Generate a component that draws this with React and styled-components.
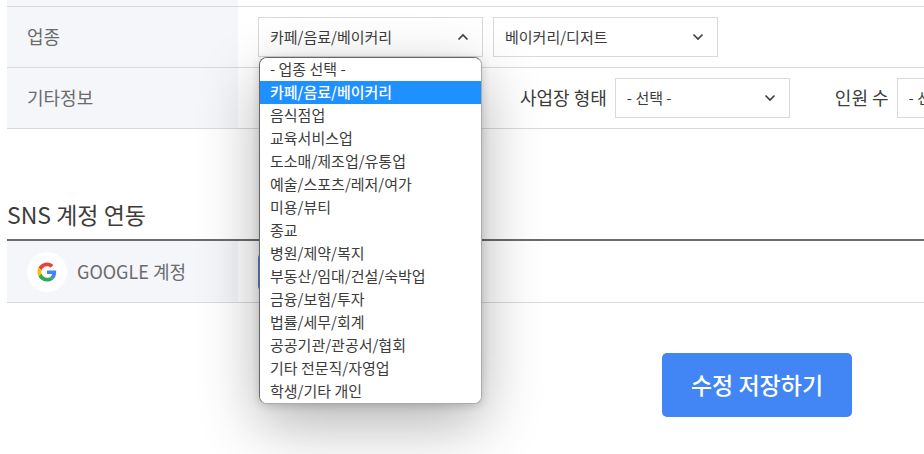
import { useState } from 'react';
import styled, { createGlobalStyle } from 'styled-components';

const GlobalStyle = createGlobalStyle`
  * {
    box-sizing: border-box;
  }

  body {
    margin: 0;
    background: #fff;
    color: #3c3c3c;
    font-family: 'Noto Sans CJK KR', 'Noto Sans', sans-serif;
  }

  button,
  select {
    font-family: inherit;
    color: inherit;
  }
`;

const BUSINESS_TYPES = [
  '- 업종 선택 -',
  '카페/음료/베이커리',
  '음식점업',
  '교육서비스업',
  '도소매/제조업/유통업',
  '예술/스포츠/레저/여가',
  '미용/뷰티',
  '종교',
  '병원/제약/복지',
  '부동산/임대/건설/숙박업',
  '금융/보험/투자',
  '법률/세무/회계',
  '공공기관/관공서/협회',
  '기타 전문직/자영업',
  '학생/기타 개인',
];

const Page = styled.main`
  padding-left: 7px;
  overflow: hidden;
`;

const Table = styled.table`
  width: 100%;
  table-layout: fixed;
  border-collapse: separate;
  border-spacing: 0;
  border-top: ${(p) => (p.$section ? '2px solid #6b6b6e' : 'none')};
`;

const HeadCell = styled.th`
  width: 231px;
  padding: 0 20px 2px;
  border-bottom: 1px solid #d9d9d9;
  background: #f5f6fa;
  color: #6b6b6b;
  font-size: 18px;
  font-weight: 400;
  line-height: 26px;
  text-align: left;
`;

const Cell = styled.td`
  padding: 10px 0 10px 20px;
  border-bottom: 1px solid #d9d9d9;
`;

const SpacerRow = styled.tr`
  > th,
  > td {
    padding: 3px 20px;
  }
`;

const AccountRow = styled.tr`
  > th {
    padding: 11px 20px 10px;
  }
`;

const Fields = styled.div`
  display: flex;
  gap: ${(p) => (p.$wide ? 45 : 10)}px;
`;

const Field = styled.div`
  display: flex;
  flex: none;
  align-items: center;
  justify-content: flex-end;
  gap: 8px;
  min-width: ${(p) => (p.$indented ? '217px' : 'auto')};
`;

const FieldLabel = styled.label`
  padding-bottom: 2px;
  font-size: 18px;
  line-height: 26px;
  white-space: nowrap;
`;

const SelectBox = styled.div`
  position: relative;
  display: grid;
  flex: none;
  width: ${(p) => (p.$small ? 175 : 225)}px;
  align-items: center;

  > select,
  > svg {
    grid-area: 1 / 1;
  }

  > svg {
    justify-self: end;
    margin-right: 14px;
    pointer-events: none;
  }
`;

const NativeSelect = styled.select`
  width: 100%;
  height: 40px;
  padding: 0 30px 2px 11px;
  border: 1px solid #d9d9d9;
  border-radius: 0;
  background: #fff;
  appearance: none;
  font-size: 15px;
  outline: none;
`;

const Menu = styled.ul`
  position: absolute;
  z-index: 1;
  top: 100%;
  left: 1px;
  right: 1px;
  margin: 0;
  padding: 0;
  overflow: hidden;
  border: 1px solid #aaa;
  border-top-color: #666;
  border-left-color: #666;
  border-radius: 8px;
  background: #fff;
  box-shadow: 0 20px 60px rgba(0, 0, 0, 0.3), 0 2px 8px rgba(0, 0, 0, 0.16);
  list-style: none;
`;

const Option = styled.li`
  padding: 0 10px 2px;
  background: ${(p) => (p.$selected ? '#1e90ff' : '#fff')};
  color: ${(p) => (p.$selected ? '#fff' : '#3c3c3c')};
  font-size: 15px;
  font-weight: ${(p) => (p.$selected ? 500 : 400)};
  line-height: 21px;
  white-space: nowrap;
  cursor: default;
`;

const Title = styled.h2`
  margin: 67px 0 7px;
  font-size: 23px;
  font-weight: 400;
  line-height: 36px;
`;

const Account = styled.div`
  display: flex;
  align-items: center;
  gap: 10px;
`;

const AccountIcon = styled.span`
  display: flex;
  width: 40px;
  height: 40px;
  align-items: center;
  justify-content: center;
  border-radius: 50%;
  background: #fff;
`;

const AccountName = styled.span`
  padding-bottom: 2px;
`;

const ConnectButton = styled.button`
  display: block;
  width: 120px;
  height: 36px;
  border: none;
  border-radius: 4px;
  background: #4285f4;
`;

const Actions = styled.div`
  display: flex;
  justify-content: flex-end;
  padding: 50px 72px 37px 0;
`;

const SaveButton = styled.button`
  width: 190px;
  height: 64px;
  padding: 0 0 2px;
  border: none;
  border-radius: 5px;
  background: #4285f4;
  color: #fff;
  font-size: 23px;
  font-weight: 500;
`;

const Chevron = ({ up }) => (
  <svg width="12" height="8" viewBox="0 0 12 8" fill="none" aria-hidden="true">
    <path
      d={up ? 'M1.5 6.5 6 2l4.5 4.5' : 'M1.5 1.5 6 6l4.5-4.5'}
      stroke="#3c3c3c"
      strokeWidth="1.6"
    />
  </svg>
);

const GoogleLogo = () => (
  <svg width="20" height="20" viewBox="-1 -1 50 50" aria-hidden="true">
    <path
      fill="#EA4335"
      d="M24 9.5c3.54 0 6.71 1.22 9.21 3.6l6.85-6.85C35.9 2.38 30.47 0 24 0 14.62 0 6.51 5.38 2.56 13.22l7.98 6.19C12.43 13.72 17.74 9.5 24 9.5z"
    />
    <path
      fill="#4285F4"
      d="M46.98 24.55c0-1.57-.15-3.09-.38-4.55H24v9.02h12.94c-.58 2.96-2.26 5.48-4.78 7.18l7.73 6c4.51-4.18 7.09-10.36 7.09-17.65z"
    />
    <path
      fill="#FBBC05"
      d="M10.53 28.59A14.5 14.5 0 0 1 9.77 24c0-1.6.27-3.14.76-4.59l-7.98-6.19A23.9 23.9 0 0 0 0 24c0 3.88.92 7.54 2.56 10.78l7.97-6.19z"
    />
    <path
      fill="#34A853"
      d="M24 48c6.48 0 11.93-2.13 15.89-5.81l-7.73-6c-2.15 1.45-4.92 2.3-8.16 2.3-6.26 0-11.57-4.22-13.47-9.91l-7.98 6.19C6.51 42.62 14.62 48 24 48z"
    />
  </svg>
);

const Select = ({ options, small, ...props }) => (
  <SelectBox $small={small}>
    <NativeSelect {...props}>
      {options.map((option) => (
        <option key={option}>{option}</option>
      ))}
    </NativeSelect>
    <Chevron />
  </SelectBox>
);

const BusinessTypeSelect = () => {
  const [value, setValue] = useState(BUSINESS_TYPES[1]);
  const [isOpen, setIsOpen] = useState(true);

  return (
    <SelectBox>
      <NativeSelect
        id="business-type"
        value={value}
        onChange={(e) => setValue(e.target.value)}
        onMouseDown={(e) => {
          e.preventDefault();
          setIsOpen((c) => !c);
        }}
      >
        {BUSINESS_TYPES.map((type) => (
          <option key={type}>{type}</option>
        ))}
      </NativeSelect>
      <Chevron up={isOpen} />
      {isOpen && (
        <Menu role="listbox" aria-label="업종">
          {BUSINESS_TYPES.map((type) => (
            <Option
              key={type}
              role="option"
              aria-selected={type === value}
              $selected={type === value}
              onClick={() => {
                setValue(type);
                setIsOpen(false);
              }}
            >
              {type}
            </Option>
          ))}
        </Menu>
      )}
    </SelectBox>
  );
};

export default function App() {
  return (
    <>
      <GlobalStyle />
      <Page>
        <Table>
          <tbody>
            <SpacerRow>
              <HeadCell />
              <Cell />
            </SpacerRow>
            <tr>
              <HeadCell scope="row">
                <label htmlFor="business-type">업종</label>
              </HeadCell>
              <Cell>
                <Fields>
                  <BusinessTypeSelect />
                  <Select
                    options={['베이커리/디저트']}
                    aria-label="세부 업종"
                  />
                </Fields>
              </Cell>
            </tr>
            <tr>
              <HeadCell scope="row">기타정보</HeadCell>
              <Cell>
                <Fields $wide>
                  <Field $indented>
                    <Select
                      small
                      options={['- 선택 -']}
                      aria-label="기타정보"
                    />
                  </Field>
                  <Field>
                    <FieldLabel htmlFor="workplace">사업장 형태</FieldLabel>
                    <Select small id="workplace" options={['- 선택 -']} />
                  </Field>
                  <Field>
                    <FieldLabel htmlFor="headcount">인원 수</FieldLabel>
                    <Select small id="headcount" options={['- 선택 -']} />
                  </Field>
                </Fields>
              </Cell>
            </tr>
          </tbody>
        </Table>

        <Title>SNS 계정 연동</Title>
        <Table $section>
          <tbody>
            <AccountRow>
              <HeadCell scope="row">
                <Account>
                  <AccountIcon>
                    <GoogleLogo />
                  </AccountIcon>
                  <AccountName>GOOGLE 계정</AccountName>
                </Account>
              </HeadCell>
              <Cell>
                <ConnectButton type="button" aria-label="GOOGLE 계정 연동" />
              </Cell>
            </AccountRow>
          </tbody>
        </Table>

        <Actions>
          <SaveButton type="button">수정 저장하기</SaveButton>
        </Actions>
      </Page>
    </>
  );
}
